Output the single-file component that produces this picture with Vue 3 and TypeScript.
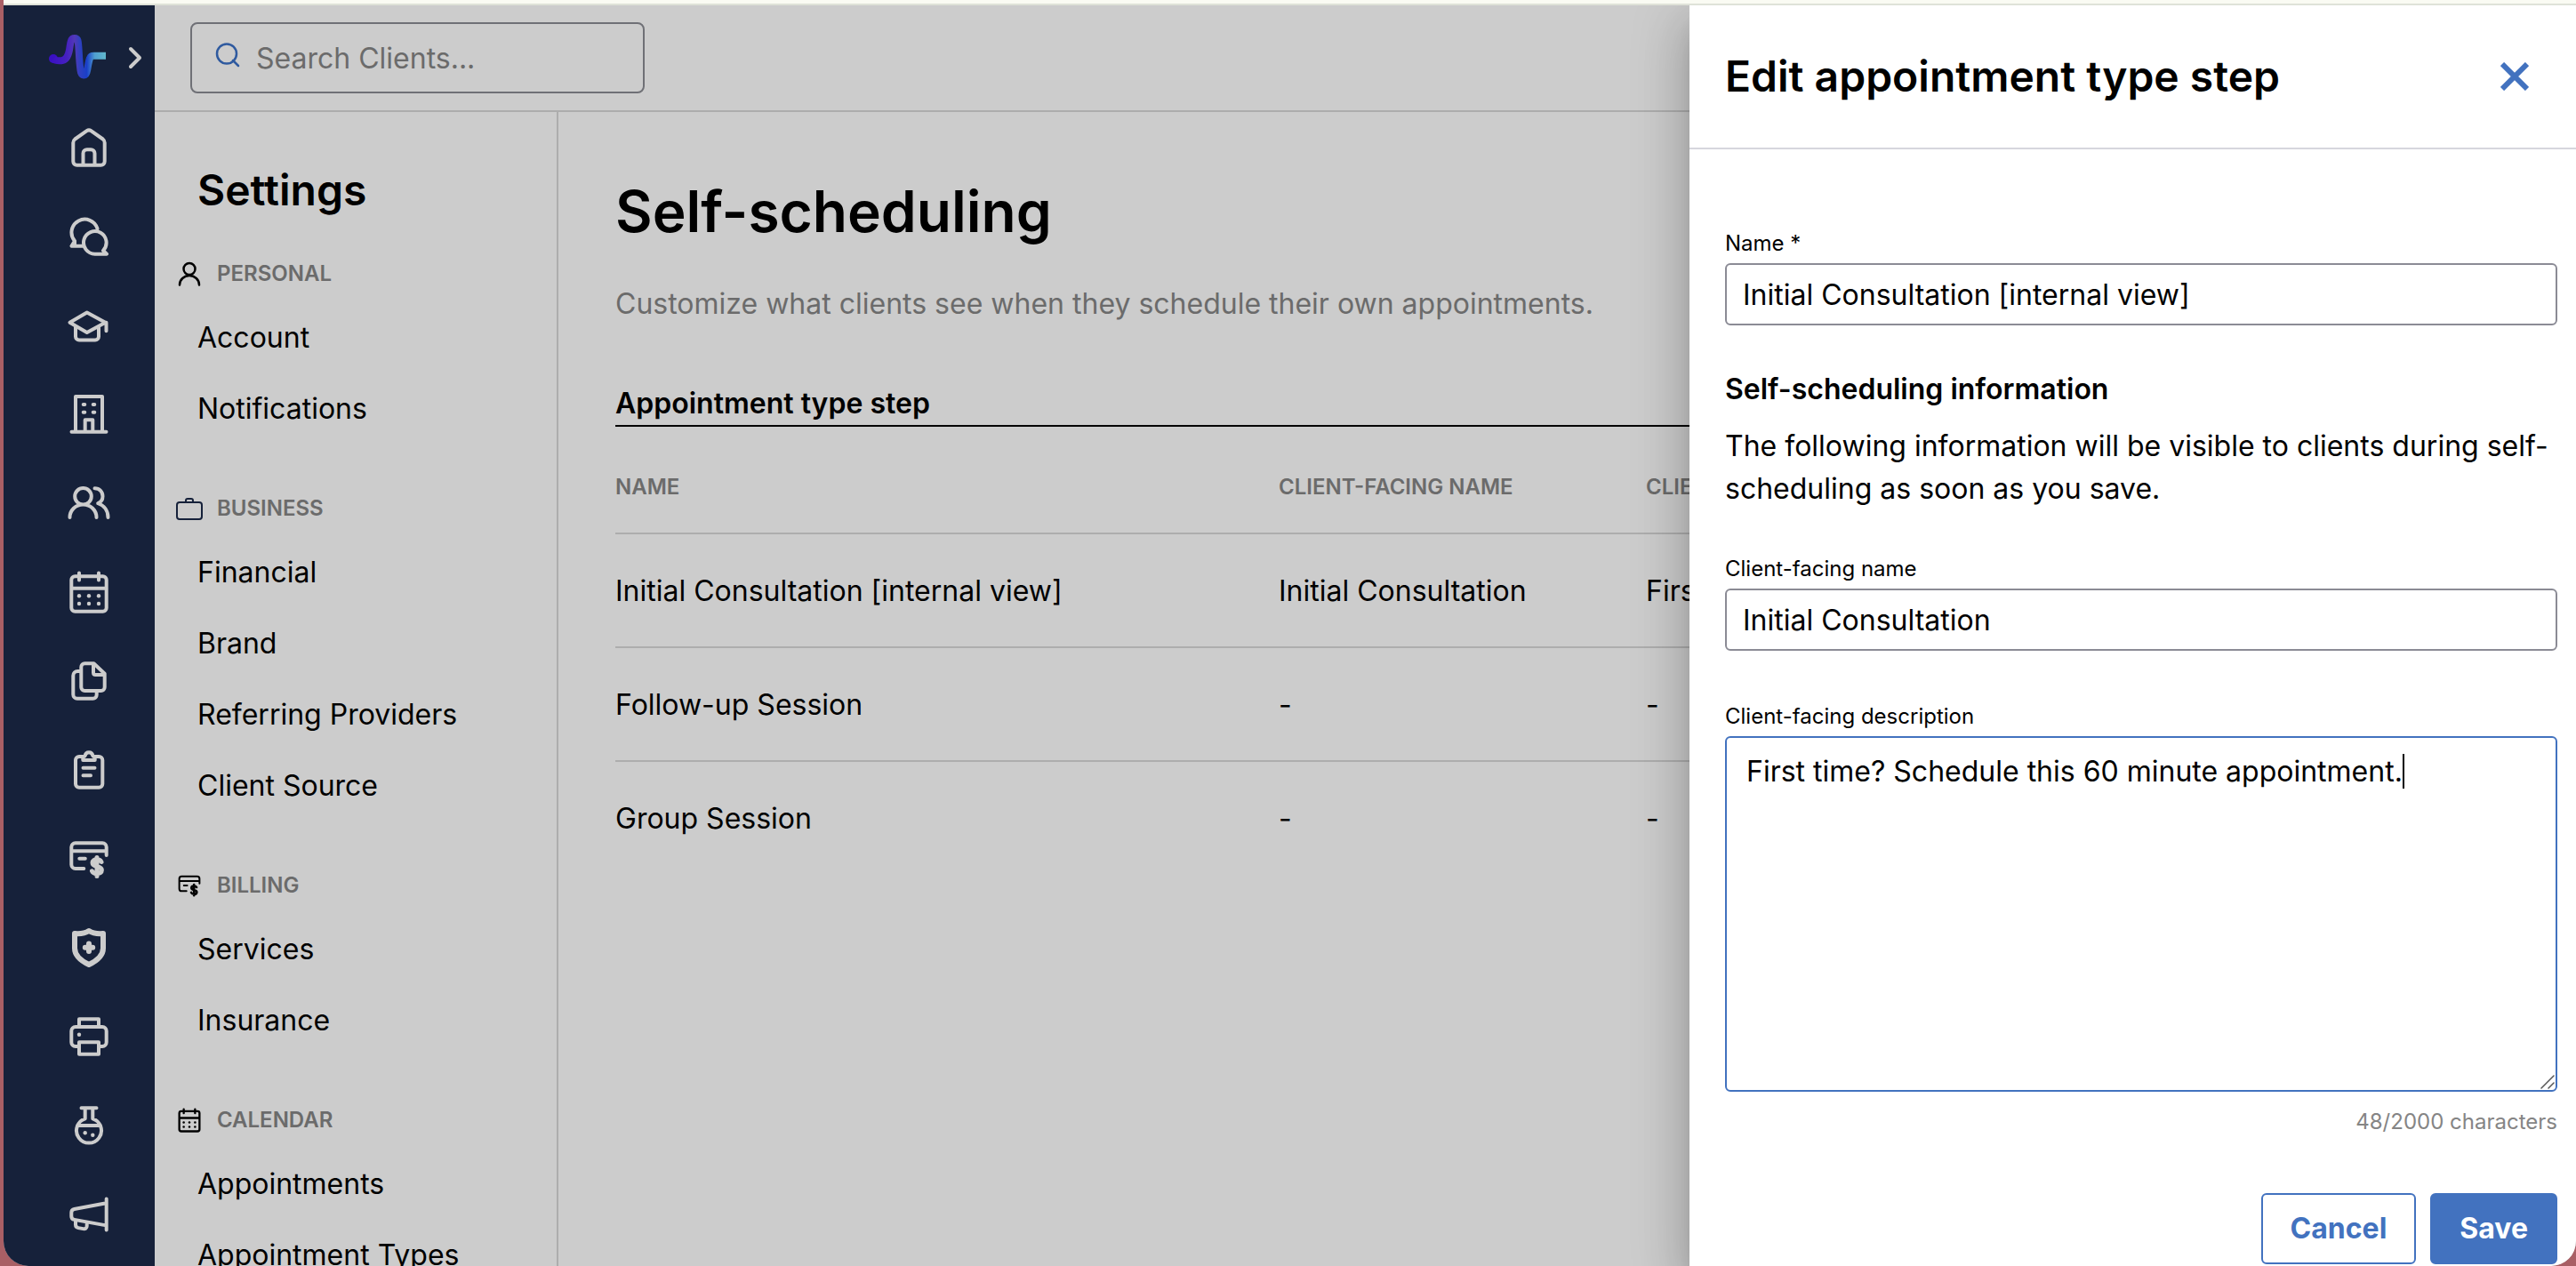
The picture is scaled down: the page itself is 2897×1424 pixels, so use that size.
<script setup lang="ts">
import { ref } from 'vue'

interface RailLink { label: string; strokes: string; dots?: [number, number][]; width?: number }
interface Group { title: string; icon: string; items: string[] }
interface Step { name: string; clientName: string; description: string }

const cardPath = 'M20.3 37h-9.500c-2.500 0-4.500-2-4.500-4.500V12.800c0-2.500 2-4.500 4.500-4.500h30.400c2.500 0 4.500 2 4.500 4.500V22M6.300 17.300h39.400M15.300 25.800h6.500'
const dollarPath = 'M40 29.500c-1-2-3-2.700-5-2.700-3 0-5 1.400-5 3.800 0 5.400 10.400 2.800 10.400 8.200 0 2.600-2.400 4-5.400 4-2.500 0-4.600-1-5.500-3M35 24.500v21'
const calendarPath = 'M10.300 8.300h31.400c2.200 0 4 1.800 4 4v31.400c0 2.200-1.800 4-4 4H10.300c-2.200 0-4-1.800-4-4V12.300c0-2.200 1.800-4 4-4zM6.300 21.700h39.400M15 4.500v8M37 4.500v8'
const calendarDots: [number, number][] = [[15, 30.300], [26, 30.300], [37, 30.300], [15, 39], [26, 39], [37, 39]]

const rail: RailLink[] = [
  { label: 'Home', strokes: 'M8.300 20.500c0-1.600.7-3 2-4L23.600 7.200c1.400-1 3.400-1 4.800 0l13.300 9.300c1.300 1 2 2.400 2 4v21c0 2.400-1.800 4.200-4.200 4.200h-27c-2.400 0-4.200-1.800-4.200-4.200zM19.500 45.500v-13c0-2.400 1.900-4.300 4.300-4.300h4.400c2.400 0 4.300 1.900 4.300 4.300v13' },
  { label: 'Messages', strokes: 'M35.500 17.300A14.800 14.800 0 1 0 10 31L6.500 36.700h13M10 31v4M32.700 45.700A12.800 12.800 0 1 1 42 41.800l4 3.900z' },
  { label: 'Programs', strokes: 'M23.800 11.500L4.500 22.700 23.800 34l20.700-11.300zM45.500 22.700v9.600M11 27v11.500c0 2.200 1.800 4 4 4h18c2.200 0 4-1.800 4-4V27' },
  { label: 'Organization', strokes: 'M11 45.500V6h30v39.500M6.500 45.700h39M21.700 45.500V32.300h8.600v13.200M19.700 15h1.600M30.700 15h1.600M19.700 23.700h1.600M30.700 23.700h1.600' },
  { label: 'Clients', strokes: 'M28.800 18.300a9.300 9.300 0 1 1-18.600 0 9.300 9.300 0 0 1 18.600 0M4.500 42c0-8 6.500-14.500 15-14.500s15 6.500 15 14.500M32.500 9.300c5.500 0 9 4 9 9 0 3.700-2.200 6.700-5.300 7.900 7 2.300 11.300 8.500 11.300 15.800' },
  { label: 'Calendar', strokes: calendarPath, dots: calendarDots },
  { label: 'Documents', strokes: 'M21.300 6.300H31.500L43.700 17.800V33c0 2.200-1.800 4-4 4H21.300c-2.200 0-4-1.800-4-4V10.300c0-2.200 1.800-4 4-4zM31 7v9.500c0 1.600 1 2.500 2.500 2.500h9.500M17.300 15h-4c-2.800 0-5 2.200-5 5v21.200c0 2.500 2 4.500 4.500 4.500h17.700c2.400 0 4.200-1.800 4.200-4.200V37' },
  { label: 'Forms', strokes: 'M19 11h-4c-2.200 0-4 1.800-4 4v26.700c0 2.200 1.800 4 4 4h22.300c2.200 0 4-1.800 4-4V15c0-2.200-1.800-4-4-4H33M19.300 15V13c0-1.300.9-2.300 2.200-2.500C22 7.700 23.500 6.200 26 6.200s4 1.500 4.500 4.300c1.300.2 2.200 1.200 2.200 2.500v2zM19.500 23.700h13M19.500 32.300H28' },
  { label: 'Billing', strokes: cardPath },
  { label: 'Insurance', width: 6, strokes: 'M26 7c-4.500 3-9.500 3.500-16 3v16.500c0 8.500 6.500 14 16 18.500 9.500-4.500 16-10 16-18.500V10c-6.500.5-11.500 0-16-3zM26 21.500v8.400M21.800 25.700h8.400' },
  { label: 'Fax', strokes: 'M15 37h-4c-2.700 0-4.700-2-4.700-4.700V19.700C6.300 17 8.300 15 11 15h30c2.700 0 4.700 2 4.700 4.700v12.600c0 2.700-2 4.700-4.700 4.700h-4M15 15V6.300h22V15M15 32.300h22v13.400H15z', dots: [[15, 23.700]] },
  { label: 'Labs', strokes: 'M17.500 6.300h17M21.700 6.300v12A14 14 0 1 0 30.300 18.300v-12M13 26h26', dots: [[21.700, 34.300], [30.300, 36.700]] },
  { label: 'Marketing', strokes: 'M45.700 8.500v35M45.500 13.300L9.500 20c-2 .4-3.200 2-3.200 4v4c0 2 1.200 3.500 3.200 3.900l36 6.500M11 33v4.500c0 2 1 3.200 3 3.600l5.500 1c2.500.5 4.200-.8 4.200-3.200V36' },
]

const groups: Group[] = [
  { title: 'PERSONAL', icon: 'person', items: ['Account', 'Notifications'] },
  { title: 'BUSINESS', icon: 'briefcase', items: ['Financial', 'Brand', 'Referring Providers', 'Client Source'] },
  { title: 'BILLING', icon: 'card', items: ['Services', 'Insurance'] },
  { title: 'CALENDAR', icon: 'calendar', items: ['Appointments', 'Appointment Types'] },
]

const steps: Step[] = [
  { name: 'Initial Consultation [internal view]', clientName: 'Initial Consultation', description: 'First time? Schedule this 60 minute appointment.' },
  { name: 'Follow-up Session', clientName: '-', description: '-' },
  { name: 'Group Session', clientName: '-', description: '-' },
]

const search = ref('')
const name = ref('Initial Consultation [internal view]')
const clientName = ref('Initial Consultation')
const description = ref('First time? Schedule this 60 minute appointment.')
</script>

<template>
  <div class="desktop">
    <div class="strip"></div>
    <div class="app">
      <nav class="rail" aria-label="Main">
        <div class="brand">
          <svg class="logo" viewBox="0 0 70 56" aria-hidden="true">
            <defs>
              <linearGradient id="pulse" gradientUnits="userSpaceOnUse" x1="4" y1="0" x2="67" y2="0">
                <stop offset="0" stop-color="#3a0fc4" />
                <stop offset=".3" stop-color="#4520c0" />
                <stop offset=".44" stop-color="#5238b8" />
                <stop offset=".54" stop-color="#2f40c0" />
                <stop offset=".66" stop-color="#1a3fc8" />
                <stop offset=".8" stop-color="#4f9fd0" />
                <stop offset="1" stop-color="#62b8cc" />
              </linearGradient>
            </defs>
            <circle cx="8" cy="29" r="5" fill="#3a0fc4" />
            <path d="M8 29.500c2 1.700 5 2 9 1.700 4-.3 7.500-4 9-12 .8-4.500 1-8 2-10.500 1.300-3.500 6.500-3.500 7.500 0C37 15 36.500 28 38.500 42c.8 7 6.500 7.500 7.500.5 1-5 1.500-10 3-14 .8-2.300 2-2.700 4.500-2.700H67" fill="none" stroke="url(#pulse)" stroke-width="8" stroke-linejoin="round" />
          </svg>
          <button class="expand" type="button" aria-label="Expand menu">
            <svg viewBox="0 0 16 26" aria-hidden="true"><path d="M3 3l10 10L3 23" /></svg>
          </button>
        </div>
        <a v-for="link in rail" :key="link.label" class="rail-link" href="#" :aria-label="link.label">
          <svg viewBox="0 0 52 52" aria-hidden="true">
            <path :d="link.strokes" :stroke-width="link.width ?? 4" />
            <path v-if="link.label === 'Billing'" :d="dollarPath" stroke-width="5" />
            <circle v-for="(dot, i) in link.dots" :key="i" class="dot" :cx="dot[0]" :cy="dot[1]" r="2.200" />
          </svg>
        </a>
      </nav>

      <div class="workspace">
        <header class="topbar">
          <label class="search">
            <svg viewBox="0 0 28 28" aria-hidden="true"><circle cx="13" cy="12.500" r="11" /><path d="M20 20l6 6" /></svg>
            <input v-model="search" type="text" placeholder="Search Clients..." aria-label="Search clients" />
          </label>
        </header>
        <div class="columns">
          <aside class="settings">
            <h2>Settings</h2>
            <section v-for="group in groups" :key="group.title" class="group">
              <h3>
                <svg v-if="group.icon === 'person'" viewBox="0 0 30 30" aria-hidden="true"><circle cx="15" cy="9.500" r="6.500" /><path d="M4 27.500c0-6 5-10.500 11-10.500s11 4.500 11 10.500" /></svg>
                <svg v-else-if="group.icon === 'briefcase'" class="navy" viewBox="0 0 30 30" aria-hidden="true"><rect x="1" y="8" width="28" height="19" rx="3" /><path d="M11 8V6c0-1.200.8-2 2-2h4c1.200 0 2 .8 2 2v2" /></svg>
                <svg v-else-if="group.icon === 'card'" viewBox="0 0 52 52" aria-hidden="true"><path :d="cardPath" stroke-width="3.500" /><path :d="dollarPath" stroke-width="4.500" /></svg>
                <svg v-else viewBox="0 0 52 52" aria-hidden="true"><path :d="calendarPath" stroke-width="4" /><circle v-for="(dot, i) in calendarDots" :key="i" class="ink" :cx="dot[0]" :cy="dot[1]" r="2.200" /></svg>
                {{ group.title }}
              </h3>
              <a v-for="item in group.items" :key="item" href="#">{{ item }}</a>
            </section>
          </aside>

          <main>
            <h1>Self-scheduling</h1>
            <p class="lead">Customize what clients see when they schedule their own appointments.</p>
            <h2>Appointment type step</h2>
            <table>
              <thead>
                <tr><th class="col-name">NAME</th><th class="col-client">CLIENT-FACING NAME</th><th>CLIENT-FACING DESCRIPTION</th></tr>
              </thead>
              <tbody>
                <tr v-for="step in steps" :key="step.name">
                  <td>{{ step.name }}</td><td>{{ step.clientName }}</td><td>{{ step.description }}</td>
                </tr>
              </tbody>
            </table>
          </main>
        </div>
      </div>

      <form class="drawer" aria-labelledby="drawer-title" @submit.prevent>
        <header>
          <h2 id="drawer-title">Edit appointment type step</h2>
          <button class="close" type="button" aria-label="Close">
            <svg viewBox="0 0 32 32" aria-hidden="true"><path d="M2 2l28 28M30 2L2 30" /></svg>
          </button>
        </header>
        <div class="body">
          <div class="field">
            <label for="step-name">Name *</label>
            <input id="step-name" v-model="name" type="text" />
          </div>
          <div class="info">
            <h3>Self-scheduling information</h3>
            <p>The following information will be visible to clients during self-scheduling as soon as you save.</p>
          </div>
          <div class="field">
            <label for="client-name">Client-facing name</label>
            <input id="client-name" v-model="clientName" type="text" />
          </div>
          <div class="field description">
            <label for="client-description">Client-facing description</label>
            <div class="editor">
              <textarea id="client-description" v-model="description" maxlength="2000"></textarea>
              <i class="caret" aria-hidden="true"></i>
              <svg class="grip" viewBox="0 0 16 16" aria-hidden="true"><path d="M1 15L15 1M9 15l6-6" /></svg>
            </div>
            <p class="count">{{ description.length }}/2000 characters</p>
          </div>
          <div class="actions">
            <button class="cancel" type="button">Cancel</button>
            <button class="save" type="submit">Save</button>
          </div>
        </div>
      </form>
    </div>
  </div>
</template>

<style>
body { margin: 0; }
</style>

<style scoped>
* { box-sizing: border-box; }
h1, h2, h3, p { margin: 0; }
h1, h2, h3 { font-weight: 600; }
a { color: inherit; text-decoration: none; }
button, input, textarea { font: inherit; color: inherit; margin: 0; outline: 0; }
button { padding: 0; border: 0; background: none; cursor: pointer; }
svg { display: block; flex: none; fill: none; stroke: currentColor; stroke-linecap: round; stroke-linejoin: round; }

.desktop { display: flex; flex-direction: column; height: 100vh; overflow: hidden; padding-left: 4px; background: #a95f65; color: #000; font: 400 32px/48px Inter, sans-serif; }
.strip { flex: none; height: 6px; background: #fafbf3; border-bottom: 2px solid #dfe2d8; }
.app { position: relative; display: flex; flex: 1; min-height: 0; overflow: hidden; border-radius: 0 0 28px 28px; background: #ccc; }

.rail { flex: none; width: 170px; background: #16213a; color: #ccc; display: flex; flex-direction: column; gap: 48px; }
.brand { display: flex; align-items: center; gap: 22px; height: 86px; padding: 32px 0 0 48px; }
.logo { width: 70px; height: 56px; stroke: none; stroke-linecap: butt; }
.expand svg { width: 16px; height: 26px; stroke-width: 4; }
.rail-link { margin-left: 70px; width: 52px; }
.rail-link svg { width: 52px; height: 52px; }
.dot { fill: #ccc; stroke: none; }

.workspace { flex: 1; min-width: 0; display: flex; flex-direction: column; }
.topbar { flex: none; display: flex; align-items: center; height: 120px; padding-left: 40px; border-bottom: 2px solid #adadad; }
.search { display: flex; align-items: center; gap: 18px; width: 511px; height: 80px; padding: 0 26px; border: 2px solid #6f7076; border-radius: 8px; }
.search svg { width: 28px; height: 28px; margin-bottom: 6px; color: #2f5a9f; stroke-width: 2.5; }
.search input { flex: 1; min-width: 0; border: 0; padding: 2px 0 0; background: none; }
.search input::placeholder { color: #6b6b6b; opacity: 1; }
.columns { flex: 1; min-height: 0; display: flex; }

.settings { flex: none; width: 454px; overflow: hidden; padding-top: 58px; border-right: 2px solid #adadad; }
.settings h2 { padding-left: 48px; margin-bottom: 32px; font-size: 48px; line-height: 60px; }
.group { margin-bottom: 40px; }
.group h3 { display: flex; align-items: center; gap: 16px; height: 64px; padding-left: 24px; font-size: 24px; color: #6b6b6b; }
.group h3 svg { width: 30px; height: 30px; color: #000; stroke-width: 2.5; }
.group h3 .navy { color: #16213a; stroke-width: 2; }
.ink { fill: #000; stroke: none; }
.group a { display: block; padding-left: 48px; line-height: 80px; }

main { flex: 1; min-width: 0; padding: 72px 64px 0; }
main h1 { font-size: 64px; line-height: 80px; }
.lead { margin-top: 40px; color: #6b6b6b; }
main h2 { margin-top: 64px; font-size: 32px; border-bottom: 2px solid #000; }
table { width: 100%; table-layout: fixed; border-collapse: separate; border-spacing: 0; text-align: left; }
th { height: 121px; padding: 16px 0 0; font-size: 24px; font-weight: 600; color: #6b6b6b; border-bottom: 2px solid #adadad; white-space: nowrap; }
.col-name { width: 746px; }
.col-client { width: 413px; }
td { height: 128px; padding: 2px 0 0; border-bottom: 2px solid #adadad; white-space: nowrap; }
tbody tr:last-child td { border-bottom-color: transparent; }

.drawer { position: absolute; top: 0; right: 0; bottom: 0; width: 997px; background: #fff; box-shadow: 0 16px 20px -10px rgba(0, 0, 0, .2), 0 32px 48px 4px rgba(0, 0, 0, .14), 0 12px 60px 10px rgba(0, 0, 0, .12); }
.drawer header { display: flex; align-items: center; justify-content: space-between; height: 162px; padding: 0 53px 0 40px; border-bottom: 2px solid #d6d6dd; }
.drawer h2 { font-size: 48px; line-height: 60px; }
.close { color: #4272bf; }
.close svg { width: 32px; height: 32px; stroke-width: 6; stroke-linecap: butt; }
.body { padding: 90px 21px 0 40px; }
.field { display: flex; flex-direction: column; gap: 6px; }
.field label { font-size: 24px; line-height: 32px; }
.field input { height: 70px; padding: 0 18px; border: 2px solid #8b8b95; border-radius: 6px; background: #fff; }
.info { display: flex; flex-direction: column; gap: 16px; margin: 48px 0 50px; }
.info h3 { font-size: 32px; }
.description { margin-top: 58px; }
.editor { position: relative; }
textarea { display: block; width: 100%; height: 400px; padding: 14px 22px; resize: none; line-height: 48px; border: 2px solid #4272bf; border-radius: 6px; background: #fff; }
.caret { position: absolute; top: 20px; left: 762px; width: 2px; height: 39px; background: #000; pointer-events: none; }
.grip { position: absolute; right: 3px; bottom: 3px; width: 16px; height: 16px; color: #555; stroke-width: 1.5; }
.count { margin-top: 12px; text-align: right; font-size: 24px; line-height: 32px; color: #858585; }
.actions { display: flex; justify-content: flex-end; gap: 16px; margin-top: 64px; }
.actions button { height: 80px; padding: 0 31px; border: 2px solid #4272bf; border-radius: 6px; font-weight: 700; }
.cancel { color: #4272bf; }
.save { background: #4272bf; color: #fff; }
</style>
